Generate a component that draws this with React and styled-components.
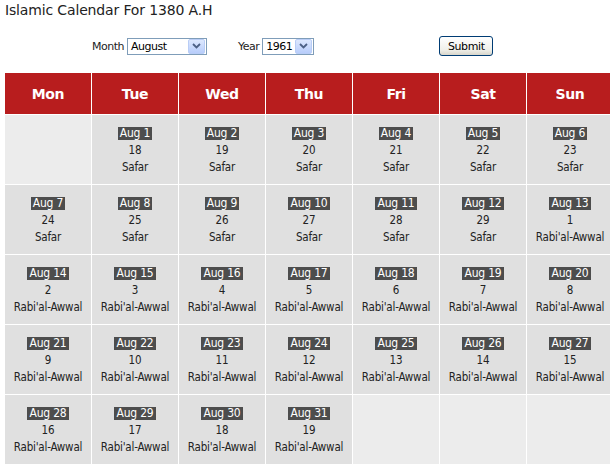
import React from 'react';
import styled, { createGlobalStyle } from 'styled-components';

const GlobalStyle = createGlobalStyle`
  html, body {
    margin: 0;
    padding: 0;
    background: #ffffff;
  }
  body {
    font-family: Tahoma, "DejaVu Sans", Verdana, sans-serif;
    color: #222;
    overflow: hidden;
  }
`;

const Page = styled.div`
  width: 610px;
  height: 466px;
  overflow: hidden;
`;

const Title = styled.h1`
  margin: 0;
  padding: 2px 0 0 5px;
  height: 22px;
  font-family: "DejaVu Sans", sans-serif;
  font-size: 14px;
  font-weight: normal;
  letter-spacing: -0.15px;
  color: #222;
`;

const Toolbar = styled.div`
  display: flex;
  align-items: center;
  height: 20px;
  margin-top: 12px;
  padding-left: 92px;
  font-family: "DejaVu Sans", sans-serif;
  font-size: 11px;
  letter-spacing: -0.5px;
  color: #222;
`;

const Field = styled.label`
  display: flex;
  align-items: center;
  gap: 3px;
  margin-right: ${(p) => p.$after}px;
`;

const SelectBox = styled.div`
  display: flex;
  align-items: center;
  justify-content: space-between;
  width: ${(p) => p.$w}px;
  height: 17px;
  box-sizing: border-box;
  border: 1px solid #7f9db9;
  background: #fff;
  padding: 0 1px 0 3px;
  font-size: 11px;
  color: #000;
`;

const Arrow = styled.span`
  display: flex;
  align-items: center;
  justify-content: center;
  width: 15px;
  height: 13px;
  border: 1px solid #b9cdf6;
  border-radius: 2px;
  background: linear-gradient(#dde8fe, #b8cdfb);
`;

const SubmitButton = styled.button`
  width: 54px;
  height: 20px;
  margin-left: 125px;
  padding: 0;
  font-family: "DejaVu Sans", sans-serif;
  font-size: 11px;
  letter-spacing: -0.4px;
  color: #000;
  border: 1px solid #003c74;
  border-radius: 3px;
  background: linear-gradient(#ffffff, #f0f0ea 70%, #d8d6cb);
`;

const Grid = styled.div`
  display: grid;
  grid-template-columns: repeat(7, 86px);
  grid-template-rows: 41px repeat(5, 69px);
  gap: 1px;
  margin: 17px 0 0 5px;
  width: 612px;
`;

const HeadCell = styled.div`
  display: flex;
  align-items: center;
  justify-content: center;
  background: #b81d1e;
  color: #fff;
  font-family: "DejaVu Sans", sans-serif;
  font-weight: bold;
  font-size: 14px;
  letter-spacing: -0.4px;
`;

const DayCell = styled.div`
  display: flex;
  flex-direction: column;
  align-items: center;
  justify-content: center;
  padding-top: 4px;
  box-sizing: border-box;
  background: ${(p) => (p.$empty ? '#ececec' : '#e0e0e0')};
  font-family: "DejaVu Sans Condensed", "DejaVu Sans", sans-serif;
  font-stretch: condensed;
  font-size: 11.5px;
  letter-spacing: -0.2px;
  color: #222;
  line-height: 17px;
`;

const DateBadge = styled.span`
  display: inline-block;
  background: #4d4d4d;
  color: #fff;
  font-size: 12px;
  letter-spacing: -0.2px;
  line-height: 13px;
  padding: 0 2px;
  margin-bottom: 2px;
`;

const days = ['Mon', 'Tue', 'Wed', 'Thu', 'Fri', 'Sat', 'Sun'];

function hijri(day) {
  // Aug 1 = 18 Safar, Aug 13 = 1 Rabi'al-Awwal
  if (day <= 12) return { d: 17 + day, m: 'Safar' };
  return { d: day - 12, m: "Rabi'al-Awwal" };
}

function ChevronDown() {
  return (
    <svg width="9" height="6" viewBox="0 0 9 6">
      <path d="M1 1 L4.5 4.5 L8 1" fill="none" stroke="#4d6185" strokeWidth="1.8" />
    </svg>
  );
}

export default function App() {
  const cells = [];
  cells.push(null);
  for (let i = 1; i <= 31; i++) cells.push(i);
  while (cells.length < 35) cells.push(null);

  return (
    <Page>
      <GlobalStyle />
      <Title>Islamic Calendar For 1380 A.H</Title>
      <Toolbar>
        <Field $after={31}>
          Month
          <SelectBox $w={80}>
            August
            <Arrow><ChevronDown /></Arrow>
          </SelectBox>
        </Field>
        <Field $after={0}>
          Year
          <SelectBox $w={52}>
            1961
            <Arrow><ChevronDown /></Arrow>
          </SelectBox>
        </Field>
        <SubmitButton>Submit</SubmitButton>
      </Toolbar>
      <Grid>
        {days.map((d) => (
          <HeadCell key={d}>{d}</HeadCell>
        ))}
        {cells.map((day, i) => {
          if (!day) return <DayCell key={i} $empty />;
          const h = hijri(day);
          return (
            <DayCell key={i}>
              <DateBadge>Aug {day}</DateBadge>
              <span>{h.d}</span>
              <span>{h.m}</span>
            </DayCell>
          );
        })}
      </Grid>
    </Page>
  );
}
